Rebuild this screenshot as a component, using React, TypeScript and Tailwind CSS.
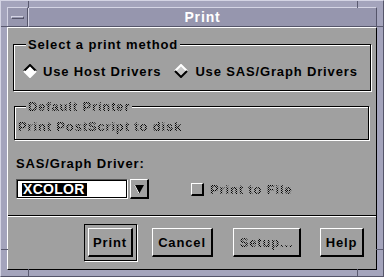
import React from "react";

const stipple =
  "bg-[image:repeating-conic-gradient(#000_0%_25%,transparent_0%_50%)] bg-[length:2px_2px] bg-clip-text text-transparent";

const Diamond = ({ selected }: { selected: boolean }) => (
  <svg width="14" height="14" viewBox="0 0 14 14" className="shrink-0">
    <polygon points="7,1 13,7 7,13 1,7" fill={selected ? "#c8c8c8" : "#ffffff"} />
    <polyline
      points="1,7 7,1 13,7"
      fill="none"
      stroke={selected ? "#ffffff" : "#000000"}
      strokeWidth="2"
    />
    <polyline
      points="1,7 7,13 13,7"
      fill="none"
      stroke={selected ? "#000000" : "#ffffff"}
      strokeWidth="2"
    />
  </svg>
);

const Button = ({
  label,
  width,
  disabled,
}: {
  label: string;
  width: string;
  disabled?: boolean;
}) => (
  <div
    className={`flex h-[29px] ${width} items-center justify-center border-t border-l border-r-2 border-b-2 border-t-white border-l-white border-r-black border-b-black`}
  >
    <span className={disabled ? stipple : ""}>{label}</span>
  </div>
);

// frame corner dividers of the window manager border
const Notch = ({ className }: { className: string }) => (
  <div className={`absolute bg-[#5a5a70] ${className}`} />
);

export default function App() {
  return (
    <div className="relative flex h-[277px] w-[384px] flex-col border border-t-[#d4d4e4] border-l-[#d4d4e4] border-r-[#55556a] border-b-[#55556a] bg-[#a4a4bc] p-[6px] font-['Liberation_Sans',Arial,sans-serif] text-[13px] leading-[15px] font-bold tracking-[0.85px] text-black">
      <Notch className="left-[27px] top-0 h-[7px] w-px" />
      <Notch className="left-[356px] top-0 h-[7px] w-px" />
      <Notch className="bottom-0 left-[27px] h-[7px] w-px" />
      <Notch className="bottom-0 left-[356px] h-[7px] w-px" />
      <Notch className="left-0 top-[25px] h-px w-[7px]" />
      <Notch className="left-0 top-[248px] h-px w-[7px]" />
      <Notch className="right-0 top-[25px] h-px w-[7px]" />
      <Notch className="right-0 top-[248px] h-px w-[7px]" />

      {/* title bar */}
      <div className="flex h-[20px] shrink-0">
        <div className="flex w-[21px] items-center justify-center border border-t-[#d4d4e4] border-l-[#d4d4e4] border-r-[#55556a] border-b-[#55556a] bg-[#9696ae]">
          <div className="h-[3px] w-[13px] border-t border-l border-r border-b border-t-[#d4d4e4] border-l-[#d4d4e4] border-r-[#55556a] border-b-[#55556a]" />
        </div>
        <div className="flex flex-1 items-center justify-center border border-t-[#d4d4e4] border-l-[#d4d4e4] border-r-[#55556a] border-b-[#55556a] bg-[#9696ae] text-[14px] text-white">
          Print
        </div>
      </div>

      {/* dialog body */}
      <div className="flex flex-1 flex-col border border-t-white border-l-white border-r-black border-b-black bg-[#a0a0a0]">
        <fieldset className="mx-[5px] mt-[9px] border border-black pt-[11px] pb-[11px] pl-[9px] shadow-[inset_1px_1px_0_#fff,1px_1px_0_#fff]">
          <legend className="ml-[3px] bg-[#a0a0a0] px-[2px]">Select a print method</legend>
          <div className="flex h-[16px] items-center">
            <Diamond selected={false} />
            <span className="ml-[6px]">Use Host Drivers</span>
            <span className="ml-[13px] flex items-center">
              <Diamond selected />
              <span className="ml-[7px]">Use SAS/Graph Drivers</span>
            </span>
          </div>
        </fieldset>

        <fieldset className="mt-[8px] mr-[7px] ml-[6px] border border-black pt-[5px] pb-[5px] pl-[3px] shadow-[inset_1px_1px_0_#fff,1px_1px_0_#fff]">
          <legend className="ml-[8px] bg-[#a0a0a0] px-[2px]">
            <span className={stipple}>Default Printer</span>
          </legend>
          <div className={stipple}>Print PostScript to disk</div>
        </fieldset>

        <div className="mt-[16px] ml-[8px]">SAS/Graph Driver:</div>

        <div className="mt-[8px] ml-[8px] flex h-[20px] items-center">
          <div className="flex h-[20px] w-[112px] items-center border border-t-[#555] border-l-[#555] border-r-white border-b-white bg-white">
            <div className="flex h-full w-full items-center border border-black pl-[4px]">
              <span className="bg-black px-[1px] text-[14px] leading-[13px] tracking-[0.3px] text-white">
                XCOLOR
              </span>
              <span className="h-[13px] w-px bg-black" />
            </div>
          </div>
          <div className="ml-[2px] flex h-[20px] w-[19px] items-center justify-center border-t border-l border-r-2 border-b-2 border-t-white border-l-white border-r-black border-b-black">
            <svg width="10" height="10" viewBox="0 0 10 10">
              <polygon points="0,1 10,1 5,10" fill="#000" />
              <line x1="0.5" y1="1" x2="5" y2="9.5" stroke="#fff" strokeWidth="1" />
            </svg>
          </div>
          <div className="ml-[42px] h-[13px] w-[13px] border-t border-l border-r-2 border-b-2 border-t-white border-l-white border-r-black border-b-black" />
          <span className={`ml-[6px] ${stipple}`}>Print to File</span>
        </div>

        <div className="mt-[16px] h-0 border-t border-b border-t-black border-b-white" />

        <div className="mt-[7px] ml-[76px] flex items-center">
          <div className="border border-black p-[3px] shadow-[1px_1px_0_#fff]">
            <Button label="Print" width="w-[45px]" />
          </div>
          <div className="ml-[15px]">
            <Button label="Cancel" width="w-[61px]" />
          </div>
          <div className="ml-[20px]">
            <Button label="Setup..." width="w-[68px]" disabled />
          </div>
          <div className="ml-[19px]">
            <Button label="Help" width="w-[44px]" />
          </div>
        </div>
      </div>
    </div>
  );
}
